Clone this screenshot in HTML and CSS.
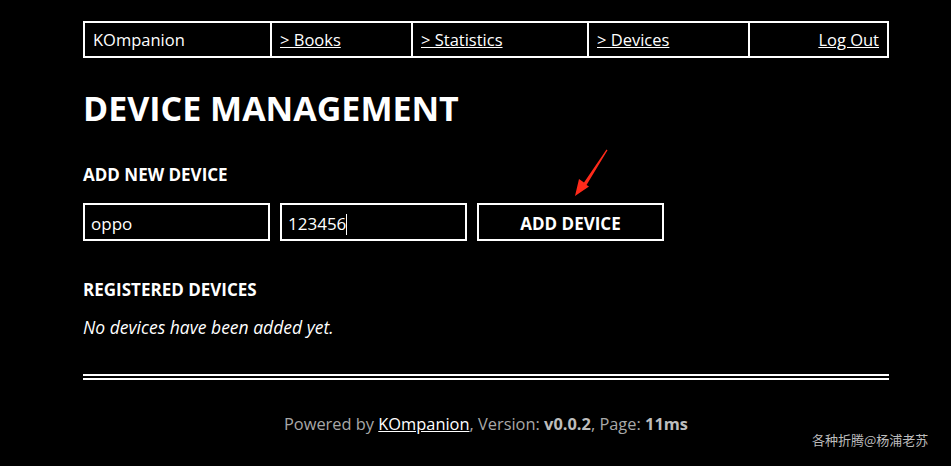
FILE: index.html
```html
<!DOCTYPE html>
<html>
<head>
<meta charset="utf-8">
<link rel="stylesheet" href="styles.css">
</head>
<body>
<div class="page">
  <nav class="nav">
    <div class="cell c1">KOmpanion</div>
    <div class="cell c2"><a href="#">&gt; Books</a></div>
    <div class="cell c3"><a href="#">&gt; Statistics</a></div>
    <div class="cell c4"><a href="#">&gt; Devices</a></div>
    <div class="cell c5 right"><a href="#">Log Out</a></div>
  </nav>
  <h1>DEVICE MANAGEMENT</h1>
  <h2 class="h-add">ADD NEW DEVICE</h2>
  <form class="form">
    <div class="field">oppo</div>
    <div class="field">123456<span class="caret"></span></div>
    <div class="btn">ADD DEVICE</div>
  </form>
  <h2 class="h-reg">REGISTERED DEVICES</h2>
  <p class="empty">No devices have been added yet.</p>
  <div class="rule"></div>
  <footer class="footer">Powered by <a href="#">KOmpanion</a>, Version: <b>v0.0.2</b>, Page: <b>11ms</b></footer>
</div>
<svg class="arrow" width="40" height="52" viewBox="0 0 40 52">
  <path d="M35.5 1.5 L13 34.5 L8 31 L4 48 L18 38.5 L15.5 37 L36.5 2.2 Z" fill="#ff2a1a"/>
</svg>
<div class="watermark">各种折腾@杨浦老苏</div>
</body>
</html>
```
FILE: styles.css
```css
html, body {
  margin: 0;
  background: #000;
  color: #fff;
  font-family: "Open Sans", "Noto Sans", sans-serif;
}
body {
  position: relative;
  width: 951px;
  height: 466px;
  overflow: hidden;
}
.page {
  margin-left: 83px;
  width: 806px;
  padding-top: 21px;
}
.nav {
  display: grid;
  grid-template-columns: 185px 141px 176px 161px 139px;
  border: 2px solid #fff;
  height: 37px;
  box-sizing: border-box;
}
.cell {
  border-left: 2px solid #fff;
  padding: 0 8px 0 8px;
  font-size: 16.5px;
  line-height: 34px;
  white-space: nowrap;
}
.cell.c1 { border-left: none; }
.cell.right { text-align: right; }
a { color: #fff; text-decoration: underline; }
h1 {
  margin: 29px 0 0 0;
  font-size: 34px;
  line-height: 42px;
  font-weight: 700;
}
h2 {
  margin: 0;
  font-size: 17px;
  line-height: 22px;
  font-weight: 700;
}
.h-add { margin-top: 35px; }
.form {
  display: flex;
  gap: 10px;
  margin-top: 17px;
}
.field, .btn {
  width: 187px;
  height: 38px;
  box-sizing: border-box;
  border: 2px solid #fff;
  font-size: 17px;
  padding: 3px 6px 0 6px;
  line-height: 31px;
}
.caret {
  display: inline-block;
  width: 1px;
  height: 21px;
  background: #fff;
  vertical-align: -5px;
}
.btn { text-align: center; font-weight: 700; }
.h-reg { margin-top: 38px; }
.empty {
  margin: 15px 0 0 0;
  font-style: italic;
  font-size: 17.5px;
  line-height: 22px;
}
.rule {
  margin-top: 36px;
  height: 2px;
  border-top: 2px solid #fff;
  border-bottom: 2px solid #fff;
}
.footer {
  margin-top: 33px;
  text-align: center;
  color: #a8a8a8;
  font-size: 16.4px;
  line-height: 22px;
}
.footer a { color: #fff; }
.footer b { color: #bdbdbd; }
.arrow {
  position: absolute;
  left: 571px;
  top: 148px;
}
.watermark {
  position: absolute;
  left: 812px;
  top: 430px;
  font-size: 13px;
  color: #bdbdbd;
  font-family: "Noto Sans CJK SC", sans-serif;
}
```
